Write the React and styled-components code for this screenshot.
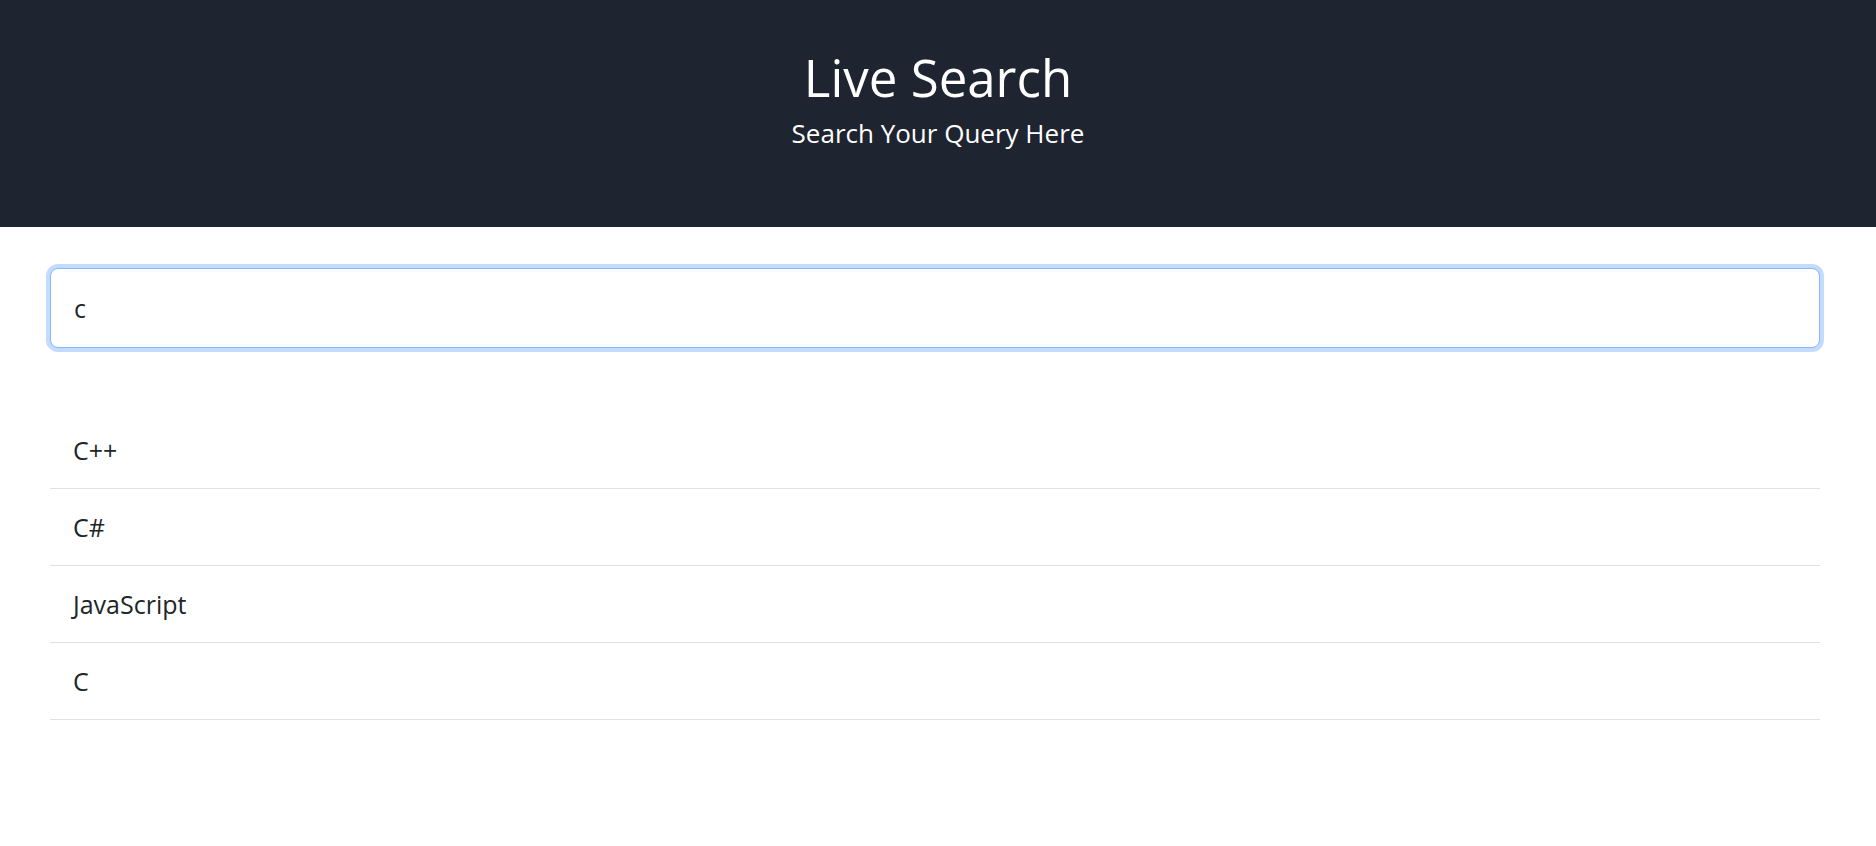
import { useState } from "react";
import styled, { createGlobalStyle } from "styled-components";

const GlobalStyle = createGlobalStyle`
    body {
        margin: 0;
        font-family: "Segoe UI", "Open Sans", "Noto Sans", sans-serif;
        background: #ffffff;
        color: #212529;
    }
    * {
        box-sizing: border-box;
    }
`;

const languages = ["C++", "C#", "JavaScript", "C", "Python", "Java", "Ruby"];

function ResultItem({ name }) {
    return <ListItemStyles>{name}</ListItemStyles>;
}

export default function App() {
    const [query, setQuery] = useState("c");

    const results = languages.filter((lang) =>
        query ? lang.toLowerCase().includes(query.toLowerCase()) && lang !== "Python" && lang !== "Java" && lang !== "Ruby" : false
    );

    return (
        <>
            <GlobalStyle />
            <HeaderStyles>
                <h1>Live Search</h1>
                <p>Search Your Query Here</p>
            </HeaderStyles>
            <ContentStyles>
                <SearchInput
                    type="text"
                    value={query}
                    autoFocus
                    onChange={(e) => setQuery(e.target.value)}
                />
                <ResultList>
                    {results.map((name) => (
                        <ResultItem key={name} name={name} />
                    ))}
                </ResultList>
            </ContentStyles>
        </>
    );
}

const HeaderStyles = styled.header`
    display: flex;
    flex-direction: column;
    align-items: center;
    height: 227px;
    background-color: #1e2430;
    color: #ffffff;
    padding-top: 45px;

    h1 {
        margin: 0;
        font-size: 51px;
        font-weight: 400;
        line-height: 65px;
    }

    p {
        margin: 0;
        margin-top: 6px;
        font-size: 26px;
        line-height: 34px;
    }
`;

const ContentStyles = styled.main`
    display: flex;
    flex-direction: column;
    padding: 41px 56px 0 50px;
`;

const SearchInput = styled.input`
    width: 100%;
    height: 80px;
    padding: 0 23px;
    font-family: inherit;
    font-size: 25px;
    color: #212529;
    border: 1px solid #86b7fe;
    border-radius: 8px;
    outline: none;
    box-shadow: 0 0 0 4px rgba(13, 110, 253, 0.25);
`;

const ResultList = styled.ul`
    list-style: none;
    margin: 64px 0 0 0;
    padding: 0;
`;

const ListItemStyles = styled.li`
    padding: 20px 23px;
    font-size: 25px;
    line-height: 36px;
    border-bottom: 1px solid #dee2e6;
`;
